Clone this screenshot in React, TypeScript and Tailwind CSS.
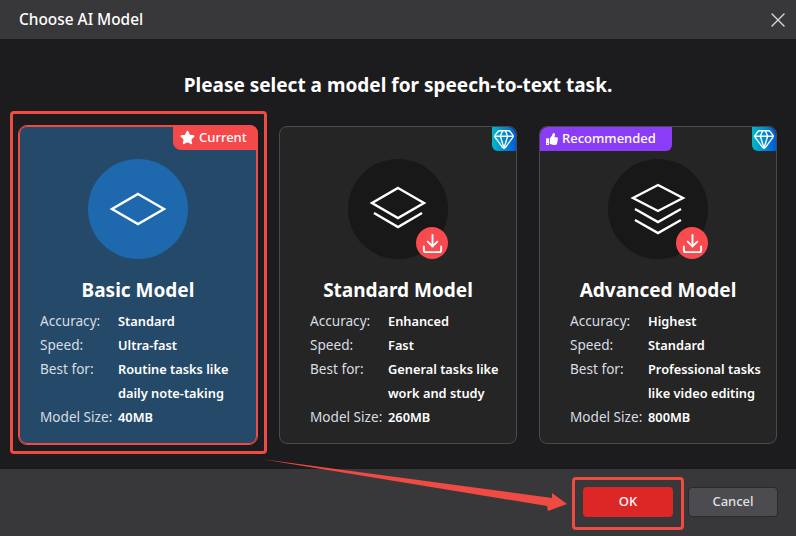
import React from "react";
import { X, Download, Gem } from "lucide-react";
import { FaStar, FaThumbsUp } from "react-icons/fa";

type Row = [string, string, string?];
type Model = { name: string; rows: Row[]; layers: number; active?: boolean; premium?: boolean; rec?: boolean };

const models: Model[] = [
  { name: "Basic Model", layers: 1, active: true, rows: [["Accuracy:", "Standard"], ["Speed:", "Ultra-fast"], ["Best for:", "Routine tasks like", "daily note-taking"], ["Model Size:", "40MB"]] },
  { name: "Standard Model", layers: 2, premium: true, rows: [["Accuracy:", "Enhanced"], ["Speed:", "Fast"], ["Best for:", "General tasks like", "work and study"], ["Model Size:", "260MB"]] },
  { name: "Advanced Model", layers: 3, premium: true, rec: true, rows: [["Accuracy:", "Highest"], ["Speed:", "Standard"], ["Best for:", "Professional tasks", "like video editing"], ["Model Size:", "800MB"]] },
];

function Layers({ n }: { n: number }) {
  const common = { fill: "none", stroke: "white", strokeWidth: 2.4 } as const;
  return (
    <svg width="100" height="100" viewBox="0 0 100 100">
      {n === 1 && <path d="M50 35 L76 50 L50 65 L24 50 Z" {...common} />}
      {n === 2 && (
        <>
          <path d="M50 29 L76 44 L50 59 L24 44 Z" {...common} />
          <path d="M26 54 L50 68 L74 54" {...common} />
        </>
      )}
      {n === 3 && (
        <>
          <path d="M50 26 L75 39 L50 52 L25 39 Z" {...common} />
          <path d="M27 50 L50 63 L73 50" {...common} />
          <path d="M27 61 L50 74 L73 61" {...common} />
        </>
      )}
    </svg>
  );
}

function Card({ m }: { m: Model }) {
  return (
    <div className={`relative h-[318px] rounded-lg border ${m.active ? "bg-[#254a69] border-[#f04b45] outline-1 outline-[#f04b45]" : "bg-[#252525] border-[#4a4a4e]"}`}>
      {m.active && (
        <div className="absolute -top-[2px] -right-[2px] h-[25px] w-[85px] bg-[#f4494b] rounded-tr-lg rounded-bl-lg flex items-center pl-[7px] gap-[4px] text-white text-[13px] font-medium">
          <FaStar size={15} color="white" />
          <span>Current</span>
        </div>
      )}
      {m.rec && (
        <div className="absolute top-0 left-0 h-6 w-[132px] bg-[#8b3cf7] rounded-tl-lg rounded-br-md flex items-center pl-1.5 gap-[4px] text-white text-[13px] font-medium">
          <FaThumbsUp size={12} color="white" />
          <span>Recommended</span>
        </div>
      )}
      {m.premium && (
        <div className="absolute top-0 right-0 w-6 h-6 rounded-tr-lg rounded-bl-md bg-gradient-to-r from-[#00b8c8] to-[#0058d8] flex items-center justify-center">
          <Gem size={22} stroke="white" strokeWidth={1.5} />
        </div>
      )}
      <div className={`relative mx-auto mt-8 w-[100px] h-[100px] rounded-full flex items-center justify-center ${m.active ? "bg-[#1e69ae]" : "bg-[#181818]"}`}>
        <Layers n={m.layers} />
        {!m.active && (
          <div className="absolute right-0 bottom-0 w-8 h-8 rounded-full bg-[#f94b4f] flex items-center justify-center">
            <Download size={23} stroke="white" strokeWidth={2} />
          </div>
        )}
      </div>
      <div className="mt-[17px] text-center text-white text-[19px] leading-[28px] font-bold">{m.name}</div>
      <div className={`mt-[5px] text-[12.8px] leading-6 ${m.active ? "pl-[20px]" : "pl-[30px]"}`}>
        {m.rows.map((r) => (
          <div key={r[0]} className="flex">
            <div className="w-[78px] shrink-0 text-[#d8dde2] text-[13.6px]">{r[0]}</div>
            <div className="text-white font-semibold whitespace-nowrap">
              <div>{r[1]}</div>
              {r[2] && <div>{r[2]}</div>}
            </div>
          </div>
        ))}
      </div>
    </div>
  );
}

export default function App() {
  return (
    <div className="relative w-[796px] h-[536px] overflow-hidden flex flex-col bg-[#1c1c1e] font-['Noto_Sans',sans-serif]">
      <div className="h-[39px] shrink-0 bg-[#38383a] flex items-center justify-between pl-[19px] pr-[6px]">
        <span className="text-white text-[15.4px] font-medium">Choose AI Model</span>
        <X size={24} stroke="#d8d8d8" strokeWidth={1.4} />
      </div>
      <div className="flex-1 px-[19px]">
        <h1 className="mt-[32px] h-[28px] leading-[28px] text-center text-white text-[19px] font-bold">Please select a model for speech-to-text task.</h1>
        <div className="mt-[27px] grid grid-cols-3 gap-[22px]">
          {models.map((m) => (
            <Card key={m.name} m={m} />
          ))}
        </div>
      </div>
      <div className="h-[67px] shrink-0 bg-[#38383a] flex items-center justify-end gap-[15px] pr-[18px] pb-[1px]">
        <button className="w-[90px] h-[30px] rounded bg-[#dd2626] text-white text-[13px] font-medium">OK</button>
        <button className="w-[90px] h-[30px] rounded border border-[#2a2a2c] bg-[#4b4b50] text-[#e0e0e0] text-[13px] font-medium">Cancel</button>
      </div>
      {/* annotations */}
      <div className="absolute left-[10px] top-[111px] w-[257px] h-[343px] border-[3px] border-[#f04b43] rounded-sm" />
      <div className="absolute left-[572px] top-[477px] w-[112px] h-[53px] border-[3px] border-[#f04b43] rounded-sm" />
      <svg className="absolute left-0 top-0 pointer-events-none" width="796" height="536" viewBox="0 0 796 536">
        <path d="M261 459 L552 498 L552 493 L567 504 L548 511 L547 506 Z" fill="#f04b43" />
      </svg>
    </div>
  );
}
